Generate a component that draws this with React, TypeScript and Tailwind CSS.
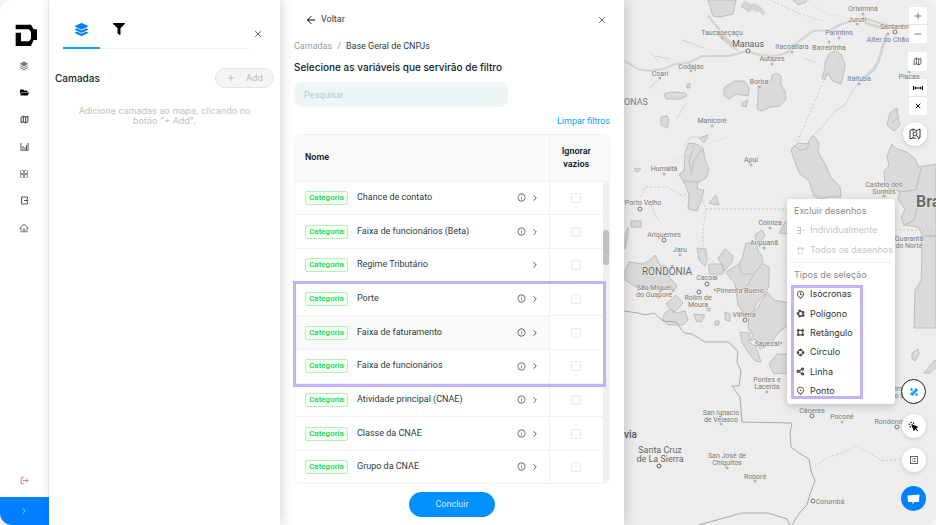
import type { ReactNode } from "react";
import {
  ArrowLeft,
  ChevronRight,
  LogOut,
  Map as MapIcon,
  Minus,
  Plus,
  X,
} from "lucide-react";
import { FaFilter, FaFolderOpen, FaLayerGroup } from "react-icons/fa";
import {
  AiOutlineAppstore,
  AiOutlineDelete,
  AiOutlineHome,
  AiOutlineInfoCircle,
  AiOutlineProfile,
} from "react-icons/ai";
import {
  RiMapPin2Line,
  RiMapPinTimeLine,
  RiPencilRuler2Fill,
  RiStackFill,
} from "react-icons/ri";
import {
  BiShapeCircle,
  BiShapePolygon,
  BiShapeSquare,
  BiShareAlt,
} from "react-icons/bi";
import { HiCursorClick } from "react-icons/hi";

function BarsIcon() {
  return (
    <svg viewBox="0 0 9 9" className="size-[9px]" fill="currentColor" aria-hidden="true">
      <path d="M.5 1h1v7h-1zM2.500 4h1v4h-1zM4.500 5h1v3h-1zM6 3h1v5H6zM7.500 1h1v7h-1zM.5 8h8v.8h-8z" />
    </svg>
  );
}

function BoxArrowIcon() {
  return (
    <svg viewBox="0 0 18 18" className="size-[9px]" fill="none" stroke="currentColor" strokeWidth="2" aria-hidden="true">
      <path d="M15 6V2H3v14h12v-4M8 9h8M13 6l3 3-3 3" />
    </svg>
  );
}

function MapLensIcon() {
  return (
    <svg
      viewBox="0 0 24 24"
      className="size-3"
      fill="none"
      stroke="currentColor"
      strokeWidth="2"
      strokeLinejoin="round"
      aria-hidden="true"
    >
      <path d="M8 20l-6 2V5l6-3 7 3 7-3v17l-4 2M8 2v5M15 5v2M8 17v3l5 1" />
      <circle cx="12" cy="12" r="4" />
      <path d="M15 15l5 6" />
    </svg>
  );
}

const navItems: { label: string; icon: ReactNode }[] = [
  { label: "Camadas", icon: <RiStackFill size={10} className="text-[#777]" /> },
  { label: "Projetos", icon: <FaFolderOpen className="text-black" /> },
  { label: "Mapas", icon: <MapIcon size={9} strokeWidth={3} /> },
  { label: "Relatórios", icon: <BarsIcon /> },
  { label: "Aplicativos", icon: <AiOutlineAppstore size={10} /> },
  { label: "Exportar", icon: <BoxArrowIcon /> },
  { label: "Início", icon: <AiOutlineHome size={10} /> },
];

const variables = [
  { name: "Chance de contato", info: true },
  { name: "Faixa de funcionários (Beta)", info: true },
  { name: "Regime Tributário", info: false },
  { name: "Porte", info: true },
  { name: "Faixa de faturamento", info: true, active: true },
  { name: "Faixa de funcionários", info: true },
  { name: "Atividade principal (CNAE)", info: true },
  { name: "Classe da CNAE", info: true },
  { name: "Grupo da CNAE", info: true },
];

const selectionTypes: { label: string; icon: ReactNode }[] = [
  { label: "Isócronas", icon: <RiMapPinTimeLine /> },
  { label: "Polígono", icon: <BiShapePolygon strokeWidth={1} /> },
  { label: "Retângulo", icon: <BiShapeSquare strokeWidth={1} /> },
  { label: "Círculo", icon: <BiShapeCircle strokeWidth={1} /> },
  { label: "Linha", icon: <BiShareAlt strokeWidth={1} /> },
  { label: "Ponto", icon: <RiMapPin2Line /> },
];

type Place = {
  x: number;
  y: number;
  lines: string[];
  dot?: [number, number];
  size?: number;
  big?: boolean;
};

const places: Place[] = [
  { x: 863, y: 11, lines: ["Oriximiná"], dot: [863, 14] },
  { x: 857, y: 22, lines: ["Juruti"], dot: [857, 24] },
  { x: 895, y: 29, lines: ["Santarém"], dot: [895, 32], big: true },
  { x: 888, y: 42, lines: ["Alter do Chão"], dot: [888, 34] },
  { x: 839, y: 35, lines: ["Parintins"], dot: [839, 38] },
  { x: 829, y: 50, lines: ["Barreirinha"], dot: [829, 42] },
  { x: 722, y: 35, lines: ["Taucapeçaçu"], dot: [722, 38] },
  { x: 748, y: 47, lines: ["Manaus"], dot: [748, 51], size: 9, big: true },
  { x: 792, y: 49, lines: ["Itacoatiara"], dot: [792, 52] },
  { x: 772, y: 61, lines: ["Autazes"], dot: [772, 64] },
  { x: 691, y: 69, lines: ["Codajás"], dot: [691, 71] },
  { x: 660, y: 76, lines: ["Coari"], dot: [660, 78] },
  { x: 759, y: 84, lines: ["Borba"], dot: [759, 87] },
  { x: 859, y: 81, lines: ["Itaituba"], dot: [859, 84] },
  { x: 909, y: 79, lines: ["Placas"], dot: [909, 72] },
  { x: 712, y: 123, lines: ["Manicoré"], dot: [712, 126] },
  { x: 751, y: 162, lines: ["Apuí"], dot: [751, 165] },
  { x: 664, y: 171, lines: ["Humaitá"], dot: [664, 174] },
  { x: 643, y: 205, lines: ["Porto Velho"], dot: [640, 209], big: true },
  { x: 884, y: 187, lines: ["Castelo dos", "Sonhos"], dot: [884, 196] },
  { x: 770, y: 225, lines: ["Colniza"], dot: [770, 228] },
  { x: 764, y: 245, lines: ["Aripuanã"], dot: [764, 248] },
  { x: 664, y: 237, lines: ["Ariquemes"], dot: [664, 240], big: true },
  { x: 680, y: 252, lines: ["Jaru"], dot: [680, 255] },
  { x: 707, y: 280, lines: ["Cacoal"], dot: [707, 284], big: true },
  { x: 654, y: 290, lines: ["São Miguel", "do Guaporé"], dot: [673, 291] },
  { x: 698, y: 300, lines: ["Rolim de", "Moura"], dot: [699, 292], big: true },
  { x: 740, y: 293, lines: ["Pimenta Bueno"], dot: [715, 290] },
  { x: 744, y: 317, lines: ["Vilhena"], dot: [745, 320], big: true },
  { x: 767, y: 346, lines: ["Sapezal"], dot: [781, 343] },
  { x: 767, y: 382, lines: ["Pontes e", "Lacerda"], dot: [767, 392] },
  { x: 812, y: 413, lines: ["Cáceres"], dot: [812, 416], big: true },
  { x: 842, y: 419, lines: ["Poconé"], dot: [842, 422] },
  { x: 896, y: 424, lines: ["Rondonópolis"], dot: [897, 427], big: true },
  { x: 721, y: 415, lines: ["San Ignacio", "de Velasco"], dot: [721, 424] },
  { x: 727, y: 458, lines: ["San José de", "Chiquitos"], dot: [727, 468] },
  { x: 755, y: 479, lines: ["Roboré"], dot: [755, 481] },
  { x: 830, y: 504, lines: ["Corumbá"], dot: [813, 501], big: true },
  { x: 909, y: 241, lines: ["Guarantã", "do Norte"] },
  { x: 904, y: 391, lines: ["Primavera", "do Leste"] },
];

function MapDrawing() {
  return (
    <svg
      viewBox="624 0 312 525"
      preserveAspectRatio="xMinYMin slice"
      className="block h-full w-full"
      role="img"
      aria-label="Mapa"
    >
      <rect x="624" width="1000" height="525" fill="#ededed" />
      <g fill="#dadada" stroke="#bebebe" strokeWidth="1" strokeLinejoin="round">
        <path d="M708 0l5 16 7 1 13-3 3-14zM793 0l5 5 8-3 1-3z" />
        <path d="M825 62l4-8 6-3 6 3 4 10-1 8-3 12-8-3-6-8-2 7-3-2 3-10z" />
        <path d="M724 88l11-7 9 0 5 7-1 8-12-2-7 5-5-4zM742 103l6-3-2 7-4-1z" />
        <path d="M664 94l7-2 14 1 2 3-7 3-14 0zM687 84l3-1 0 5-3 0z" />
        <path d="M758 88l6-5 7-2 1-6 4-2 5 3 0 8 4 7 1 8-6 7-10 1-8 4-5-2 1-10z" />
        <path d="M661 117l6-1 2 4-2 8-6-3zM699 138l9-3-4 8z" />
        <path d="M890 113l7-5 1 9 2 8-6 6-7-6zM892 122l8-5" />
        <path d="M685 152l4-9 7 1 7 4 2 12 4 9-3 9-10 6-12-1-5-9 5-3z" />
        <path d="M694 146l-5 15 2 10M702 149l-8 12-3 13" fill="none" />
        <path d="M684 181l14 1-1 7 7 1-3 11-4 10-9-2 1-14z" />
        <path d="M709 203l7-8 3 10-6-1zM631 221h10v6h-10z" />
        <path d="M791 150l7-7 9 1 6-9 6 8-1 9 7 11 5 13 10 11 1 10-12 0-9 2-6-3-5-15-9-7-4-9z" />
        <path d="M791 150l4-5 4 5 8-1 2-6" fill="none" />
        <path d="M887 156l5-12 5 5 10 3 8 7 4 8 17-3v72l-13 0-5-9-14-2-3-7 4-9-7-10 2-8-10-1-5-6-1-13 5-5z" />
        <path d="M898 192l18-2 5-22M903 226l11-6 4-14" fill="none" />
        <path d="M921 236l15 0v92h-22l1-38 6-10 1-20z" />
        <path d="M697 248l9 1 1 12-2 5-6-6zM709 264h14v10h-14zM718 258l7-9 8 7-1 6-8 9-3-8z" />
        <path d="M726 272l13-8 3-5 4-16 10 0 2 8 4 5 1 8 6 3v19l-4 8-9 10-3 9-9 1-6-9-3-21-7-9z" />
        <path d="M739 264l3 10 12 0 8-11M754 274l-6 11-9 6" fill="none" />
        <path d="M755 235l7-5 3 5-4 6-5 0zM779 233l6-11h4v12z" />
        <path d="M625 270l4-8 14 2 7-4 5-5 5 10 6 1 4 12 7 8-3 4-8-2-15 2-15-3-11-7z" />
        <path d="M666 304l10-9 7 8-9 10zM664 314l7-5 5 4 9-2 3 9-5 5-15 0-5-5z" />
        <path d="M694 314l11 1-4 7-5-1zM725 312l5 2 0 7-5-1zM715 321h4v4h-4zM707 308h3v3h-3z" />
        <path d="M789 303l-15-3-7-8-10 17-8 5-1 14 5 7-3 6 6-2 4 10 10-5 9-12 10-7z" />
        <path d="M740 332l10 1-1 9 7 5 5 15-6-1-7-9-6-10zM769 364l8-10h12v19l-15 1z" />
        <path d="M912 353l6-4 1 5-4 7-3-2zM924 373l11-13 4 5-9 8z" />
        <path d="M625 234l3-7 0 8-3 14zM635 168l6 1-3 3-3-1z" />
      </g>
      <g fill="none" stroke="#d3d3d3" strokeLinecap="round" strokeLinejoin="round">
        <path d="M625 61l13 8 11 2 14-2 12-5 13-1 14-7 27 0 18-5 12 4 16 1 12-3 8-9 18-13 17-1 12-6 21-6 17 5 13 4h30" strokeWidth="2" />
        <path d="M708 16l11 13 9 13 9 8" strokeWidth="2" />
        <path d="M721 35l12 11" strokeWidth="5" />
        <path d="M743 6l6 4 5-5 5 3 4 5M745 3l12 7" strokeWidth="4" />
        <path d="M886 35l-5 18-3 9-4 7-12 11M866 23l12 4 18 1" strokeWidth="3" />
        <path d="M861 80l-7 9-10 17-9 5-17 21-7 5" />
        <path d="M658 80l-8 8M655 56l15 3M682 40l22 8M650 52l8 9M803 58l12 4" />
        <path d="M685 145l5-8 9 0M685 105l-8 13M650 203l5 12 4 6" />
      </g>
      <g fill="none" stroke="#c8c8c8" strokeWidth="1">
        <path d="M842 55L824 80l-27 62M706 209h84M641 197l4-10h22l14 8 18-2 7 16-3 20 0 22 10 11" strokeDasharray="2 2" />
        <path d="M895 230h41M815 466l14-9 16-5 10-6 16 8 12 7 18-2M770 0l28 13 25 8" strokeDasharray="2 2" />
        <path d="M805 0l22 14 24 5M675 160l22-13 31-10" stroke="#e1e1e1" />
      </g>
      <path
        d="M624 311l14 2 7 2 9-2 9 8 13 1 8 11 8 1 13 8 23 0 6 5 4 5-1 10 4 9-2 15h-7l8 11 2 25 50 1-2 10 1 14 8 6 10 6 2 12 4 10-5 13-3 11-5 5-6 8-5 9-4-8-19-6-26 0-47 13-2 5"
        fill="none"
        stroke="#a8a8a8"
      />
      <g
        fontFamily="Roboto, sans-serif"
        fill="#7b7b7b"
        stroke="#eeeeee"
        strokeWidth="1"
        paintOrder="stroke"
      >
        {places.map((place) => (
          <g key={place.lines[0]}>
            {place.dot && (
              <circle
                cx={place.dot[0]}
                cy={place.dot[1]}
                r={place.big ? 2 : 1}
                fill="#f2f2f2"
                stroke={place.big ? "#6f6f6f" : "#a0a0a0"}
                paintOrder="normal"
              />
            )}
            {place.lines.map((line, index) => (
              <text
                key={line}
                x={place.x}
                y={place.y + index * 7}
                fontSize={place.size ?? 7}
                fill={place.size ? "#5c5c5c" : undefined}
                textAnchor="middle"
              >
                {line}
              </text>
            ))}
          </g>
        ))}
        <text x="660" y="453" fontSize="9" fill="#666666" textAnchor="middle">
          Santa Cruz
        </text>
        <text x="660" y="462" fontSize="9" fill="#666666" textAnchor="middle">
          de La Sierra
        </text>
        <circle cx="659" cy="466" r="2" stroke="#555555" fill="#f2f2f2" paintOrder="normal" />
        <text x="624" y="105" fontSize="9">
          ONAS
        </text>
        <text x="667" y="275" fontSize="10" fill="#666666" textAnchor="middle">
          RONDÔNIA
        </text>
        <text x="624" y="438" fontSize="10" fill="#555555" fontWeight="500">
          via
        </text>
        <text x="916" y="207" fontSize="16" fill="#6a6a6a" fontWeight="700">
          Brasil
        </text>
        <text x="641" y="530" fontSize="7">
          Camiri
        </text>
      </g>
    </svg>
  );
}

function Logo() {
  return (
    <svg viewBox="0 0 66 66" className="ml-1 h-[22px] w-[22px]" role="img" aria-label="Logotipo">
      <path fill="#000" d="M2 2h46l8 14h10v32H56L48 66H2V26h16v26h24l6-8V24l-6-8H2z" />
    </svg>
  );
}

function Sidebar() {
  return (
    <nav className="flex w-[49px] shrink-0 flex-col items-center border-r border-[#f3f3f3] bg-white pt-6">
      <Logo />
      <ul className="mt-[6px] flex flex-col">
        {navItems.map((item) => (
          <li key={item.label}>
            <button
              aria-label={item.label}
              className="flex h-[27px] w-6 items-center justify-center text-[9px] text-[#555]"
            >
              {item.icon}
            </button>
          </li>
        ))}
      </ul>
      <button aria-label="Sair" className="mt-auto mb-3 text-[#d9573f]">
        <LogOut size={9} strokeWidth={2} />
      </button>
      <button
        aria-label="Expandir menu"
        className="flex h-7 w-[49px] items-center justify-center bg-[#0080ff] text-[#8fe3ff]"
      >
        <ChevronRight size={10} />
      </button>
    </nav>
  );
}

function LayersPanel() {
  return (
    <section className="relative z-20 w-[231px] shrink-0 bg-white px-[6px] pt-[10px] shadow-[2px_0_12px_rgba(0,0,0,0.16)]">
      <div className="flex items-center pl-2">
        <div role="tablist" className="flex h-[39px] flex-1 border-b border-[#f0f0f0]">
          <button
            role="tab"
            aria-selected="true"
            aria-label="Camadas"
            className="-mb-px flex w-[37px] justify-center border-b-2 border-[#1e9bff] pt-[13px] text-[13px] text-[#0080ff]"
          >
            <FaLayerGroup />
          </button>
          <button
            role="tab"
            aria-selected="false"
            aria-label="Filtros"
            className="flex w-[37px] justify-center pt-[13px] text-[12px] text-black"
          >
            <FaFilter />
          </button>
        </div>
        <button aria-label="Fechar camadas" className="mr-2 flex w-4 justify-center pt-2 text-[#444]">
          <X size={10} />
        </button>
      </div>
      <div className="mt-[19px] flex items-center justify-between">
        <h2 className="text-[10px] leading-4 font-medium text-[#10232b]">Camadas</h2>
        <button
          disabled
          className="flex h-5 w-[59px] items-center justify-center gap-[10px] rounded-full border border-[#e3e3e3] bg-[#f5f5f5] text-[9px] text-[#bcbcbc]"
        >
          <Plus size={10} />
          Add
        </button>
      </div>
      <p className="mt-[18px] px-5 text-center text-[9px] leading-[10px] text-[#c2c2c2]">
        Adicione camadas ao mapa, clicando no botão "+ Add".
      </p>
    </section>
  );
}

function VariablesTable() {
  return (
    <div className="relative mt-[7px] flex flex-1 flex-col rounded-md border border-[#f1f1f1]">
      <table className="w-full flex-1 table-fixed border-collapse text-left text-[9px] text-[#2b3b41]">
        <thead>
          <tr className="h-[46px] bg-[#fafafa] text-[#10232b]">
            <th className="border-r border-b border-[#f1f1f1] pl-[10px] font-semibold">Nome</th>
            <th className="w-[54px] border-b border-[#f1f1f1] text-center leading-[13px] font-semibold">
              Ignorar vazios
            </th>
            <th className="w-[6px] border-b border-[#f1f1f1]" aria-hidden="true"></th>
          </tr>
        </thead>
        <tbody>
          {variables.map((variable, index) => (
            <tr key={variable.name} className="border-b border-[#f1f1f1] last:border-b-0">
              <td
                className={
                  variable.active
                    ? "border-r border-[#f1f1f1] bg-[#fafafa] pr-[9px] pl-[10px]"
                    : "border-r border-[#f1f1f1] pr-[9px] pl-[10px]"
                }
              >
                <div className="flex items-center">
                  <span className="w-[43px] rounded-xs border border-[#b2f2b8] bg-[#f2fff2] text-center text-[8px] leading-3 font-medium text-[#0fd850]">
                    Categoria
                  </span>
                  <span className="ml-[9px] flex-1">{variable.name}</span>
                  {variable.info && (
                    <button aria-label={"Informações sobre " + variable.name} className="text-[#444]">
                      <AiOutlineInfoCircle size={9} />
                    </button>
                  )}
                  <button aria-label={"Abrir " + variable.name} className="ml-1 text-[#333]">
                    <ChevronRight size={10} />
                  </button>
                </div>
              </td>
              <td className="text-center">
                <input
                  type="checkbox"
                  aria-label={"Ignorar vazios em " + variable.name}
                  className="mx-auto block size-[10px] appearance-none rounded-xs border border-[#e9e9e9] bg-white"
                />
              </td>
              {index === 0 && (
                <td rowSpan={variables.length} className="rounded-br-md bg-[#f0f0f0] pt-12 align-top">
                  <div className="h-[35px] rounded-full bg-[#c1c1c1]"></div>
                </td>
              )}
            </tr>
          ))}
        </tbody>
      </table>
      <div className="pointer-events-none absolute top-[146px] right-[3px] -left-[2px] h-[106px] border-[3px] border-[#c3b1fa]"></div>
    </div>
  );
}

function FilterPanel() {
  return (
    <main className="relative z-10 flex w-[344px] shrink-0 flex-col bg-white px-[14px] pt-[14px] pb-2 font-[Roboto,sans-serif] shadow-[2px_0_12px_rgba(0,0,0,0.16)]">
      <div className="flex h-3 items-center justify-between pr-[3px] pl-[11px]">
        <button className="flex items-center gap-1 text-[9px] text-[#2b3b41]">
          <ArrowLeft size={12} className="text-black" />
          Voltar
        </button>
        <button aria-label="Fechar filtros" className="text-[#444]">
          <X size={10} />
        </button>
      </div>
      <nav aria-label="Trilha" className="mt-[14px] flex gap-[5px] text-[9px] leading-3">
        <a href="#camadas" className="text-[#9a9a9a]">
          Camadas
        </a>
        <span className="text-[#888]">/</span>
        <span className="text-[#2b3b41]">Base Geral de CNPJs</span>
      </nav>
      <h1 className="mt-[7px] font-[Inter,sans-serif] text-[10px] leading-4 font-medium text-[#10232b]">
        Selecione as variáveis que servirão de filtro
      </h1>
      <input
        type="search"
        aria-label="Pesquisar"
        placeholder="Pesquisar"
        className="mt-[7px] h-[25px] w-[214px] rounded-lg bg-[#edf5f6] px-[10px] text-[9px] outline-none placeholder:text-[#b9c3c6]"
      />
      <button className="mt-2 self-end text-[9px] leading-3 text-[#00a6f9]">Limpar filtros</button>
      <VariablesTable />
      <button className="mt-2 h-[25px] w-[86px] self-center rounded-full bg-[#0090ff] text-[9px] text-[#d8eeff]">
        Concluir
      </button>
    </main>
  );
}

function DrawingMenu() {
  return (
    <div className="absolute top-[199px] right-[41px] w-[108px] rounded-sm bg-white px-[7px] pt-[5px] pb-[5px] text-[9px] whitespace-nowrap shadow-[0_2px_8px_rgba(0,0,0,0.2)]">
      <h3 className="leading-[14px] text-[#8a8a8a]">Excluir desenhos</h3>
      <button disabled className="mt-[2px] flex h-5 items-center gap-[5px] pl-[2px] text-[#c6c6c6]">
        <svg viewBox="0 0 9 9" className="size-[9px]" fill="none" stroke="currentColor">
          <path d="M1 1.500h3M1 4.500h3M1 7.500h3M4.500 1v7M6 4.500h2.500" />
        </svg>
        Individualmente
      </button>
      <button disabled className="flex h-5 items-center gap-[5px] pl-[2px] text-[#c6c6c6]">
        <AiOutlineDelete />
        Todos os desenhos
      </button>
      <hr className="-mx-1 my-[2px] border-[#efefef]" />
      <h3 className="mt-[6px] leading-[12px] text-[#8a8a8a]">Tipos de seleção</h3>
      <ul className="mt-1 -ml-[3px] flex h-[114px] w-[72px] flex-col justify-between border-[3px] border-[#c3b1fa] pt-px">
        {selectionTypes.map((item) => (
          <li key={item.label}>
            <button className="flex h-[10px] w-full items-center gap-[5px] pl-[2px] text-[#333]">
              {item.icon}
              {item.label}
            </button>
          </li>
        ))}
      </ul>
    </div>
  );
}

const roundButton =
  "flex size-6 items-center justify-center rounded-full bg-white text-[#333] shadow-[0_1px_4px_rgba(0,0,0,0.15)]";

function MapArea() {
  return (
    <section className="relative min-w-0 flex-1 overflow-hidden rounded-r-xl bg-[#ededed]">
      <div className="absolute inset-0">
        <MapDrawing />
      </div>
      <div className="absolute top-[7px] right-[9px] flex flex-col items-end text-[#333]">
        <div className="flex flex-col divide-y divide-[#e5e5e5] rounded-xs bg-white text-[#4b6570]">
          <button aria-label="Aproximar" className="flex size-[18px] items-center justify-center">
            <Plus size={10} />
          </button>
          <button aria-label="Afastar" className="flex size-[18px] items-center justify-center">
            <Minus size={10} />
          </button>
        </div>
        <button
          aria-label="Tipo de mapa"
          className="mt-[9px] flex size-[19px] items-center justify-center rounded-xs bg-white"
        >
          <MapIcon size={9} />
        </button>
        <div className="mt-2 flex flex-col divide-y divide-[#e5e5e5] rounded-xs bg-white text-black">
          <button aria-label="Medir distância" className="flex size-[18px] items-center justify-center">
            <svg viewBox="0 0 10 8" className="h-2 w-[10px]" fill="currentColor">
              <path d="M0 2h1v4H0zM9 2h1v4H9zM1 4l2-1.500v1h4v-1L9 4 7 5.500v-1H3v1z" />
            </svg>
          </button>
          <button aria-label="Limpar medição" className="flex size-[18px] items-center justify-center">
            <X size={8} strokeWidth={3} />
          </button>
        </div>
      </div>
      <button aria-label="Pesquisar no mapa" className={"absolute top-[122px] right-[9px] " + roundButton}>
        <MapLensIcon />
      </button>
      <DrawingMenu />
      <div className="absolute right-[10px] bottom-[14px] flex flex-col items-center gap-[10px]">
        <button
          aria-label="Desenhar"
          className="flex size-[25px] items-center justify-center rounded-full border border-[#10232b] bg-white text-[#0a9bff]"
        >
          <RiPencilRuler2Fill size={10} />
        </button>
        <button aria-label="Selecionar" className={roundButton}>
          <HiCursorClick size={11} className="text-black" />
        </button>
        <button aria-label="Legenda" className={roundButton}>
          <AiOutlineProfile size={10} />
        </button>
        <button
          aria-label="Abrir conversa"
          className="mt-1 flex size-[25px] items-center justify-center rounded-full bg-[#0080ff] text-white"
        >
          <svg viewBox="0 0 13 12" className="h-3 w-[13px]" fill="currentColor">
            <path d="M.5 2.500L12.500 1.500 12 9H7.500L5.500 11.500V9H1z" />
          </svg>
        </button>
      </div>
    </section>
  );
}

export default function App() {
  return (
    <div className="min-h-screen bg-[#f3f3f3] font-[Inter,'Open_Sans',sans-serif]">
      <div className="flex min-h-screen overflow-hidden rounded-xl">
        <Sidebar />
        <LayersPanel />
        <FilterPanel />
        <MapArea />
      </div>
    </div>
  );
}
